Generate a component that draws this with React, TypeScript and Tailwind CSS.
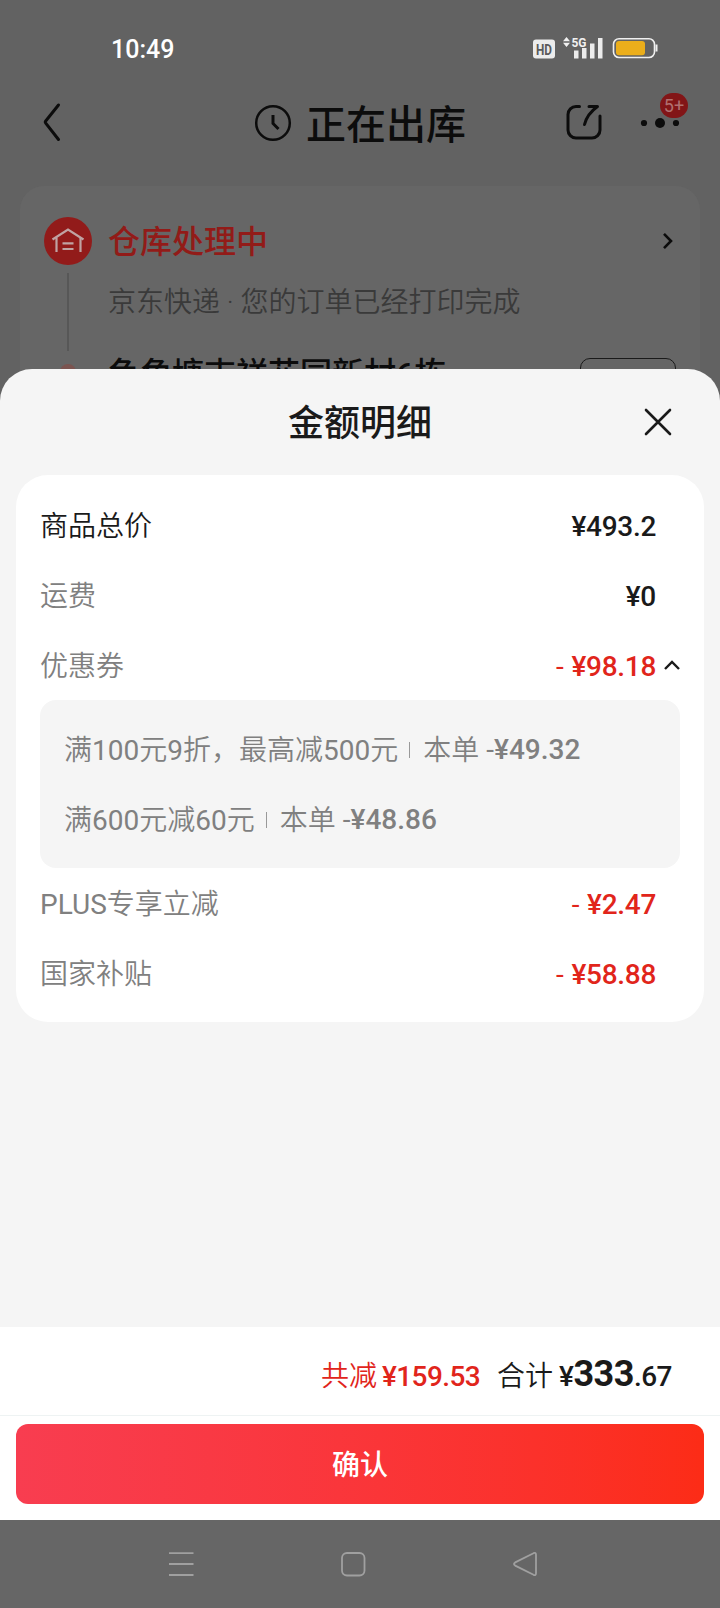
import { useState } from "react";

type PriceRowProps = {
  label: string;
  amount: string;
  discount?: boolean;
  strong?: boolean;
  expanded?: boolean;
};

type Coupon = {
  rule: string;
  amount: string;
};

const coupons: Coupon[] = [
  { rule: "满100元9折，最高减500元", amount: "¥49.32" },
  { rule: "满600元减60元", amount: "¥48.86" },
];

// Latin letters and digits sit one step heavier than the Chinese around them
function MixedText({ text }: { text: string }) {
  return (
    <>
      {text.split(/([A-Z0-9]+)/).map((part, i) =>
        i % 2 === 1 ? (
          <span key={i} className="font-normal">
            {part}
          </span>
        ) : (
          part
        ),
      )}
    </>
  );
}

function StatusBar() {
  return (
    <div className="flex h-[84px] items-start justify-between pl-[111px] pr-[62px] pt-[34px] text-white">
      <span className="text-[25px] font-medium leading-[31px]">10:49</span>
      <svg width="126" height="24" viewBox="0 0 126 24" className="mt-[2px]">
        <rect x="1" y="3.5" width="22" height="19" rx="3" fill="#ececec" />
        <text x="12" y="18.5" textAnchor="middle" fontSize="14.5" fontWeight="700" textLength="16" lengthAdjust="spacingAndGlyphs" fill="#5a5a5a">
          HD
        </text>
        <path d="M31 5.3 34.5 1l3.5 4.3zM31 6.8h7L34.5 11z" fill="#f0f0f0" />
        <text x="39.5" y="11" fontSize="13" fontWeight="700" textLength="15" lengthAdjust="spacingAndGlyphs" fill="#f0f0f0">
          5G
        </text>
        <path d="M42 14.5h4.500v8H42zM50 12h4.500v10.500H50zM58 7.500h4.500v15H58zM66 2h4.500v20.500H66z" fill="#ececec" />
        <rect x="81.5" y="2.7" width="41" height="18.8" rx="5.5" fill="none" stroke="#f0f0f0" strokeWidth="1.6" />
        <rect x="84" y="5" width="29" height="14.2" rx="3" fill="#ebae1b" />
        <path d="M124.5 8.500v7" stroke="#f0f0f0" strokeWidth="2" />
      </svg>
    </div>
  );
}

function NavHeader() {
  return (
    <div className="flex h-[102px] items-start pl-[42px] pr-[30px] pt-[8px] text-[#0c0c0c]">
      <svg width="20" height="42" viewBox="0 0 20 42" className="mt-[9px]" fill="none" stroke="currentColor" strokeWidth="3" strokeLinecap="round" strokeLinejoin="round">
        <path d="M16.5 4 3.5 20.2Q2.900 21 3.500 21.800L16.500 38.500" />
      </svg>
      <div className="ml-[192px] flex items-start">
        <svg width="38" height="38" viewBox="0 0 38 38" className="mt-[12px]" fill="none" stroke="currentColor" strokeWidth="2.5">
          <circle cx="19" cy="19" r="16.8" />
          <path d="M19 11v8.500l5.500 5.500" strokeWidth="3" />
        </svg>
        <h1 className="ml-[14px] text-[40px] font-medium leading-[68px]">正在出库</h1>
      </div>
      <div className="ml-auto flex">
        <svg width="40" height="40" viewBox="0 0 40 40" className="mt-[10px]" fill="none" stroke="currentColor" strokeWidth="3" strokeLinecap="round" strokeLinejoin="round">
          <path d="M14.5 4.500H11a8 8 0 0 0-8 8V28a8 8 0 0 0 8 8h16a8 8 0 0 0 8-8V14" />
          <path d="M24 4.500h8.500C25.500 9.500 21.500 14.500 19.500 22.500" />
        </svg>
        <div className="relative ml-[34px] h-[60px] w-[51px]">
          <svg width="42" height="12" viewBox="0 0 42 12" className="mt-[25px]" fill="currentColor">
            <circle cx="5" cy="6" r="3.1" />
            <circle cx="21" cy="6" r="5" />
            <circle cx="37" cy="6" r="3.1" />
          </svg>
          <span className="absolute left-[21px] top-[1px] h-[25px] w-[28px] rounded-full bg-[#821517] text-center text-[18px] leading-[26px] text-[#b07070]">
            5+
          </span>
        </div>
      </div>
    </div>
  );
}

function DeliveryCard() {
  return (
    <div className="mx-[20px] flex h-[260px] rounded-[24px] bg-[#666666] px-[24px] pt-[31px]">
      <div className="flex w-[48px] flex-col items-center">
        <svg width="48" height="48" viewBox="0 0 48 48">
          <circle cx="24" cy="24" r="24" fill="#921b1a" />
          <g fill="none" stroke="#c0a3a3" strokeWidth="2.2">
            <path d="M8.5 22.500 24 12.500l15.500 10" />
            <path d="M12.500 35V20.500M36.500 35V20.500M18.500 26.300h11M18.500 32h11" />
          </g>
        </svg>
        <div className="mt-[8px] h-[78px] w-[2px] bg-[#575757]" />
        <div className="mt-[13px] h-[16px] w-[16px] rounded-full bg-[#7b5450]" />
      </div>
      <div className="ml-[16px] flex-1">
        <div className="flex h-[48px] items-center justify-between">
          <span className="mt-[2px] text-[32px] font-medium text-[#921b18]">仓库处理中</span>
          <svg width="12" height="18" viewBox="0 0 12 18" className="mr-[2px]" fill="none" stroke="#0c0c0c" strokeWidth="2.6">
            <path d="M2 1.800 9 9l-7 7.200" />
          </svg>
        </div>
        <p className="mt-[17px] text-[28px] font-[350] leading-[42px] text-[#3a3a3a]">京东快递 · 您的订单已经打印完成</p>
        <div className="mt-[26px] flex justify-between">
          <span className="text-[32px] font-medium leading-[48px] text-[#0c0c0c]">鱼角塘吉祥花园新村6栋</span>
          <span className="mt-[8px] h-[48px] w-[96px] rounded-[10px] border border-[#1a1a1a]" />
        </div>
      </div>
    </div>
  );
}

function PriceRow({ label, amount, discount, strong, expanded }: PriceRowProps) {
  return (
    <div className="flex h-[70px] items-center text-[28px]">
      <span className={`mt-[4px] font-[350] ${strong ? "text-[#1a1a1a]" : "text-[#808080]"}`}>
        <MixedText text={label} />
      </span>
      <span className={`ml-auto mt-[3px] font-medium tracking-[-0.3px] ${discount ? "text-[#e1251b]" : "text-[#1a1a1a]"}`}>
        {discount && <span className="mr-[8px] font-normal">-</span>}
        {amount}
      </span>
      <span className="flex w-[24px] justify-end">
        {expanded && (
          <svg width="16" height="10" viewBox="0 0 16 10" fill="none" stroke="#1a1a1a" strokeWidth="2.4">
            <path d="M1 9l7-7 7 7" />
          </svg>
        )}
      </span>
    </div>
  );
}

function CouponList() {
  return (
    <div className="h-[168px] rounded-[16px] bg-[#f5f5f5] px-[24px] pt-[16px]">
      {coupons.map((coupon) => (
        <div key={coupon.amount} className="flex h-[70px] items-center text-[28px] font-[350] text-[#808080]">
          <span>
            <MixedText text={coupon.rule} />
          </span>
          <span className="mb-[3px] ml-[11px] h-[16px] w-[1px] bg-[#999999]" />
          <span className="ml-[13px]">本单</span>
          <span className="mb-[2px] ml-[7px] font-normal">-</span>
          <span className="mb-[2px] font-medium">{coupon.amount}</span>
        </div>
      ))}
    </div>
  );
}

function SystemNav() {
  return (
    <div className="flex h-[88px] bg-[#666666] pl-[168px]">
      <svg width="370" height="30" viewBox="0 0 370 30" className="mt-[29px]" fill="none" stroke="#a0a0a0" strokeWidth="1.8">
        <path d="M1 4.200h24.500M1 15h24.500M1 26h24.500" />
        <rect x="174" y="4" width="22.5" height="22.5" rx="5" />
        <path d="M347.200 13.400 365.500 4.200Q368 3.200 368 5.800v18.400q0 2.600-2.500 1.600L347.200 16.600q-2.400-1.600 0-3.200z" />
      </svg>
    </div>
  );
}

export default function App() {
  const [open, setOpen] = useState(true);

  return (
    <div className="relative flex h-[1608px] w-[720px] flex-col overflow-hidden bg-[#626262] font-['Roboto','Noto_Sans_CJK_SC',sans-serif]">
      <div className="flex-1">
        <StatusBar />
        <NavHeader />
        <DeliveryCard />
      </div>

      {open && (
        <div className="absolute inset-x-0 bottom-[88px] flex h-[1151px] flex-col overflow-hidden rounded-t-[32px] bg-[#f5f5f5]">
          <div className="flex h-[106px] items-center">
            <h2 className="flex-1 pl-[108px] pt-[4px] text-center text-[36px] font-medium text-[#1a1a1a]">金额明细</h2>
            <button type="button" onClick={() => setOpen(false)} className="flex w-[108px] justify-center pr-[17px]">
              <svg width="28" height="28" viewBox="0 0 28 28" fill="none" stroke="#1a1a1a" strokeWidth="2.6" strokeLinecap="round">
                <path d="M2 2l24 24M26 2 2 26" />
              </svg>
            </button>
          </div>

          <div className="mx-[16px] h-[547px] rounded-[32px] bg-white px-[24px] pt-[15px]">
            <PriceRow label="商品总价" amount="¥493.2" strong />
            <PriceRow label="运费" amount="¥0" />
            <PriceRow label="优惠券" amount="¥98.18" discount expanded />
            <CouponList />
            <PriceRow label="PLUS专享立减" amount="¥2.47" discount />
            <PriceRow label="国家补贴" amount="¥58.88" discount />
          </div>

          <div className="mt-auto h-[193px] bg-white">
            <div className="flex h-[89px] items-baseline justify-end border-b border-[#eef3f3] pr-[48px] pt-[20px] text-[28px]">
              <span className="font-[350] text-[#e1251b]">共减</span>
              <span className="ml-[5px] font-medium tracking-[-0.6px] text-[#e1251b]">¥159.53</span>
              <span className="ml-[17px] font-[350] text-[#1a1a1a]">合计</span>
              <span className="ml-[6px] font-medium tracking-[-0.5px] text-[#1a1a1a]">
                ¥<span className="text-[36px] font-bold">333</span>.67
              </span>
            </div>
            <button
              type="button"
              onClick={() => setOpen(false)}
              className="mx-[16px] mt-[8px] h-[80px] w-[688px] rounded-[12px] bg-linear-to-r from-[#f83d50] to-[#fc2c16] pt-[3px] text-[28px] font-medium text-white"
            >
              确认
            </button>
          </div>
        </div>
      )}

      <SystemNav />
    </div>
  );
}
